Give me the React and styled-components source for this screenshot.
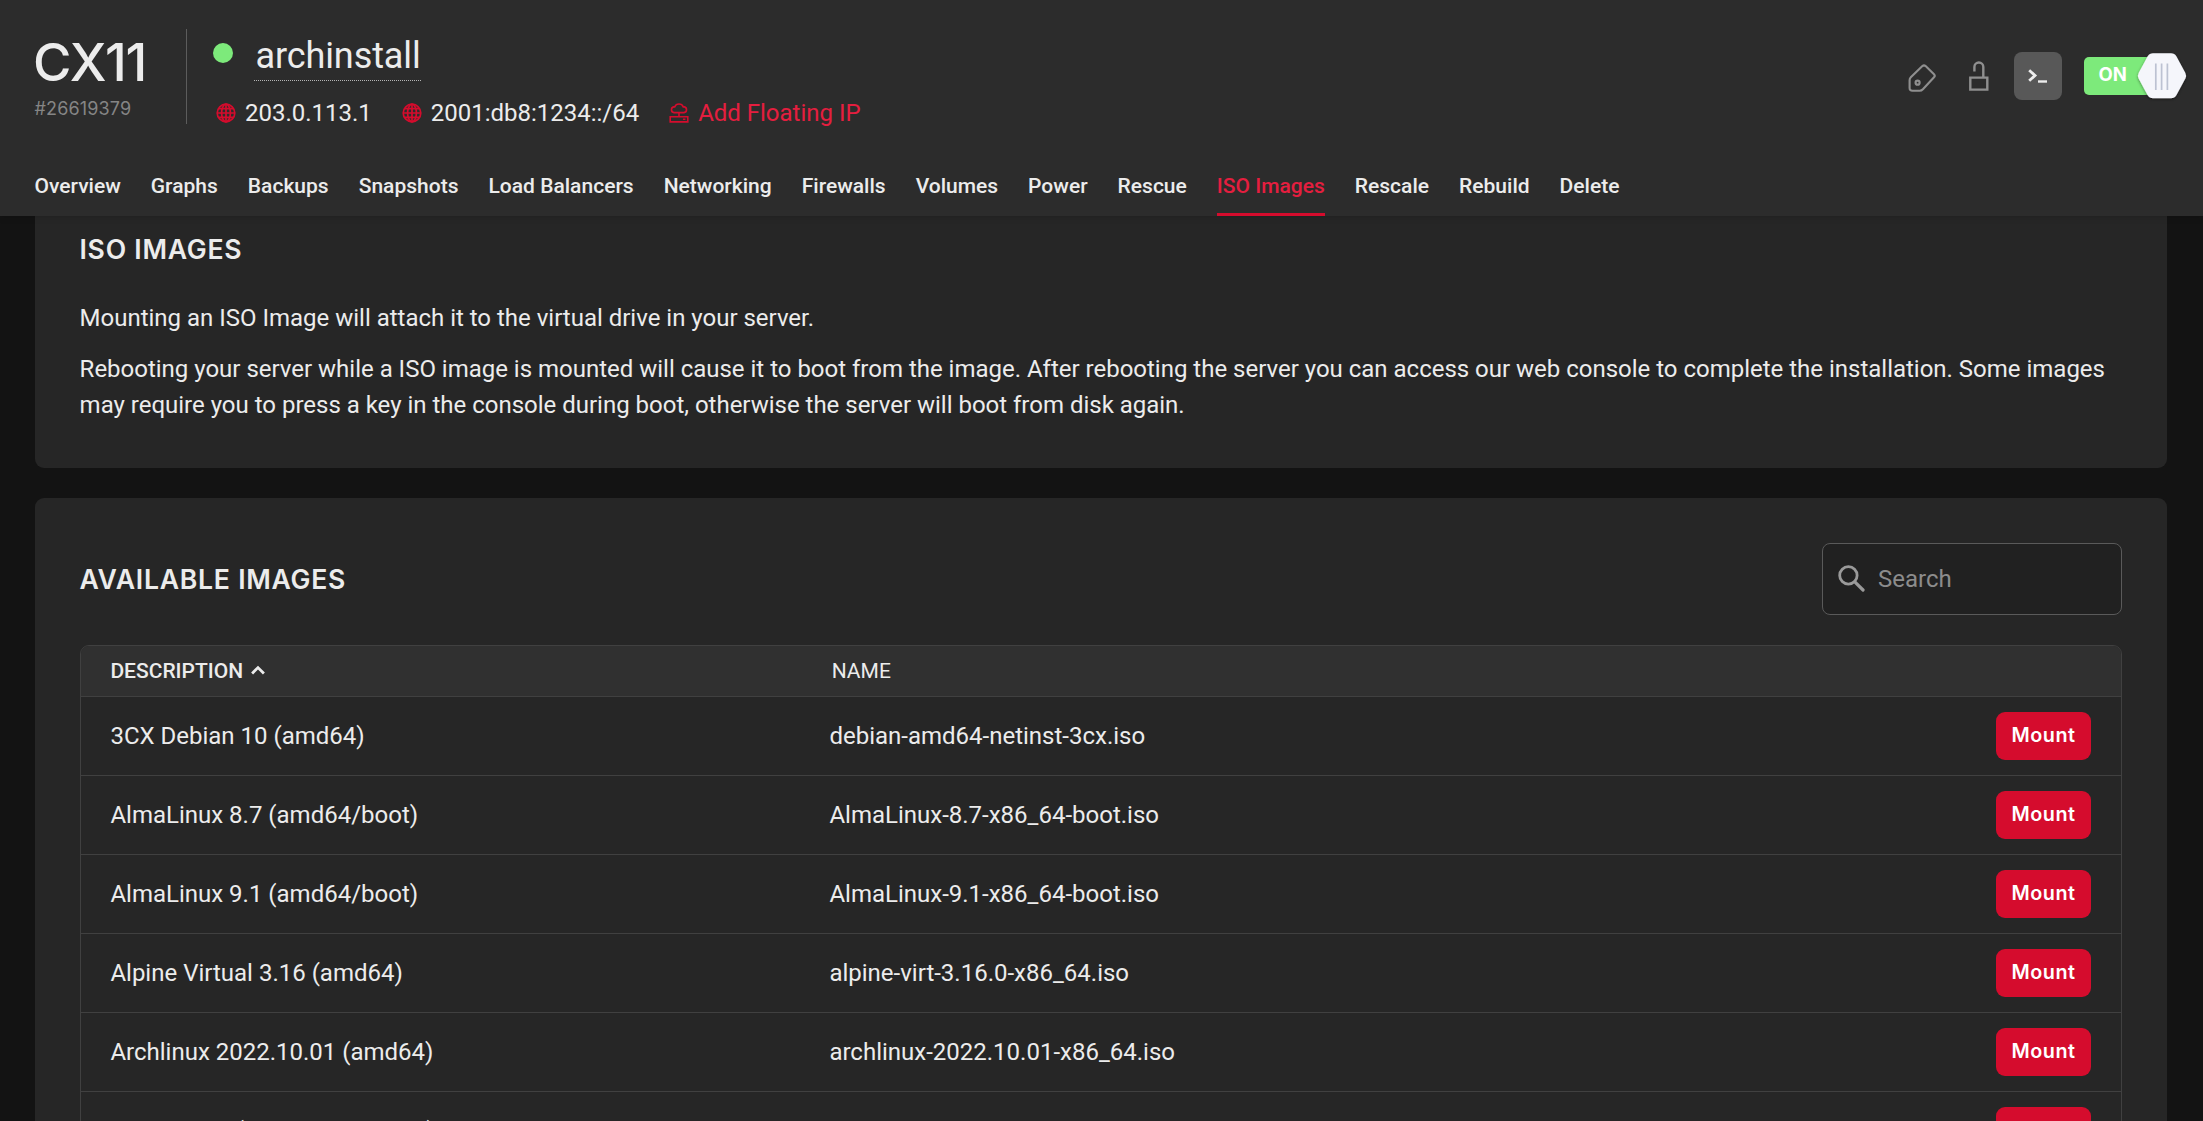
import React from "react";
import styled, { createGlobalStyle } from "styled-components";

const brand = "#d50c2d";
const brandText = "#e51e3f";
const ink = "#ececec";
const heading = `"Inter", "Liberation Sans", sans-serif`;

const GlobalStyle = createGlobalStyle`
  * { box-sizing: border-box; }
  html, body { margin: 0; background: #131313; }
  body {
    height: 1121px;
    overflow: hidden;
    color: ${ink};
    font: 400 24px/36px Roboto, "Liberation Sans", sans-serif;
  }
`;

const Page = styled.div`
  height: 1121px;
  overflow: hidden;
`;
const Header = styled.header`
  position: relative;
  display: flex;
  flex-direction: column;
  justify-content: space-between;
  height: 216px;
  padding: 29px 17px 0 34.5px;
  background: #2c2c2c;
  box-shadow: 0 0 8px rgba(0, 0, 0, 0.18);
`;
const HeaderTop = styled.div`
  display: flex;
  height: 95px;
`;
const Plan = styled.div`
  width: 152.5px;
  border-right: 1px solid #5c5c5c;
  font-family: ${heading};
`;
const PlanName = styled.div`
  height: 64px;
  padding-top: 1px;
  margin-left: -1.5px;
  font-size: 52.5px;
  font-weight: 500;
  line-height: 64px;
  letter-spacing: -1.4px;
  white-space: nowrap;
`;
const PlanId = styled.div`
  margin-top: 5px;
  font-size: 18px;
  line-height: 22px;
  letter-spacing: 0.15px;
  color: #858585;
`;
const Server = styled.div`
  flex: 1;
  padding-left: 26px;
`;
const ServerTitle = styled.div`
  display: flex;
  align-items: flex-start;
`;
const StatusDot = styled.span`
  width: 20px;
  height: 20px;
  margin: 14px 21px 0 0;
  border-radius: 50%;
  background: #7dea7b;
`;
const ServerName = styled.span`
  height: 52px;
  padding: 6px 0.5px 0 1.5px;
  font-size: 36px;
  line-height: 42px;
  letter-spacing: -0.1px;
  border-bottom: 1px dotted #b5b5b5;
`;
const Addresses = styled.div`
  display: flex;
  gap: 30px;
  padding: 14px 0 0 3px;
`;
const Address = styled.span`
  display: flex;
  align-items: center;
  gap: 9px;
  height: 36px;
  line-height: 36px;
  letter-spacing: -0.01px;
  color: ${(p) => (p.$link ? brandText : ink)};
`;
const Actions = styled.div`
  display: flex;
  align-items: center;
  height: 94px;
`;
const IconButton = styled.button`
  display: flex;
  align-items: center;
  justify-content: center;
  width: 48px;
  height: 48px;
  margin: 0 0 0 ${(p) => p.$gap || 0}px;
  padding: ${(p) => p.$drop || 0}px 0 0;
  border: 0;
  border-radius: 8px;
  color: #8f8f8f;
  background: ${(p) => (p.$filled ? "#585858" : "transparent")};
`;
const Toggle = styled.div`
  display: flex;
  align-items: center;
  width: 102px;
  margin-left: 22px;
`;
const ToggleTrack = styled.div`
  flex: none;
  width: 64px;
  height: 38px;
  padding-left: 14.5px;
  border-radius: 5px 0 0 5px;
  background: #7dea7b;
  color: #fff;
  font: 700 18.5px/35px ${heading};
`;
const Knob = styled.svg`
  margin-left: -16px;
  flex: none;
`;
const Nav = styled.nav`
  display: flex;
  gap: 30px;
`;
const Tab = styled.a`
  padding-bottom: 14px;
  border-bottom: 3px solid ${(p) => (p.$active ? brand : "transparent")};
  color: ${(p) => (p.$active ? brandText : ink)};
  font-size: 21px;
  font-weight: 500;
  line-height: 25px;
  letter-spacing: 0.01px;
`;
const Main = styled.main`
  display: flex;
  flex-direction: column;
  gap: 30px;
  padding: 0 36px 0 35px;
`;
const Card = styled.section`
  padding: ${(p) => (p.$scrolled ? 15 : 45)}px 45px 45px;
  border-radius: ${(p) => (p.$scrolled ? "0 0 9px 9px" : "9px")};
  background: #262626;
`;
const Title = styled.h2`
  margin: 0 0 0 -0.5px;
  font: 600 26.6px/36px ${heading};
  text-transform: uppercase;
  letter-spacing: 0.75px;
`;
const Copy = styled.p`
  margin: ${(p) => p.$gap}px 0 0 -0.4px;
  letter-spacing: -0.009px;
`;
const CardHead = styled.div`
  display: flex;
  align-items: center;
  justify-content: space-between;
  margin-bottom: 30px;
`;
const SearchBox = styled.label`
  display: flex;
  align-items: center;
  width: 300px;
  height: 72px;
  padding-left: 14.5px;
  gap: 13.5px;
  border: 1px solid #5a5a5a;
  border-radius: 8px;
  background: #212121;
  color: #8c8c8c;

  svg {
    margin-bottom: 2px;
  }
`;
const Table = styled.div`
  border: 1px solid #404040;
  border-radius: 9px 9px 0 0;
  overflow: hidden;
`;
const Row = styled.div`
  display: grid;
  grid-template-columns: 719px 1fr auto;
  align-items: center;
  height: 79px;
  padding: 0 30px 0 29.4px;
  border-bottom: 1px solid #404040;
`;
const HeadRow = styled(Row)`
  height: 51px;
  background: #303030;
  font-size: 21px;
`;
const HeadCell = styled.div`
  display: flex;
  align-items: center;
  gap: 8px;
  padding-left: ${(p) => (p.$sorted ? 0 : 2.3)}px;
  font-weight: ${(p) => (p.$sorted ? 500 : 400)};

  svg {
    margin-bottom: 2px;
  }
`;
const MountButton = styled.button`
  width: 95px;
  height: 48px;
  margin: 0;
  padding: 0 0 2px;
  border: 0;
  border-radius: 9px;
  background: ${brand};
  color: #fff;
  font: 600 19.8px/46px ${heading};
  letter-spacing: 0.55px;
`;

const GlobeIcon = () => (
  <svg width="20" height="20" viewBox="0 0 20 20" fill="none" stroke={brand} strokeWidth="1.7">
    <circle cx="10" cy="10" r="8.8" />
    <ellipse cx="10" cy="10" rx="4.4" ry="8.8" />
    <path d="M10 1v18M1 10h18M2.6 5.6h14.8M2.6 14.4h14.8" />
  </svg>
);
const FloatingIcon = () => (
  <svg width="20" height="20" viewBox="0 0 20 20" fill="none" stroke={brand} strokeWidth="1.6">
    <path d="M5 9.6a2.9 2.9 0 0 1-.3-5.7h1A4.6 4.6 0 0 1 14.3 3.9h1a2.9 2.9 0 0 1-.3 5.7Z" />
    <path d="M10 9.6v4.2M1.2 18.9v-5.2h17.6v5.2ZM14 16.3h2.4" />
  </svg>
);
const TagIcon = () => (
  <svg width="28" height="28" viewBox="0 0 28 28" fill="none" stroke="currentColor" strokeWidth="2.1" strokeLinejoin="round">
    <path d="M14.4 2.1Q16 .7 17.6 2.1L26 10.2Q27.5 11.8 26 13.3L14.9 25.3Q13.5 26.8 11.6 26.8H4.4Q1.6 26.8 1.6 24V16.2Q1.6 14.4 2.8 13.2Z" />
    <circle cx="9.6" cy="18.7" r="2" strokeWidth="2.2" />
  </svg>
);
const UnlockIcon = () => (
  <svg width="20" height="30" viewBox="0 0 20 30" fill="none" stroke="currentColor" strokeWidth="2.4">
    <path d="M1.3 16.6h17v12h-17Z" />
    <path d="M5.4 10.4V5.9a4.4 4.4 0 0 1 8.9 0v10.5" />
  </svg>
);
const TerminalIcon = () => (
  <svg width="20" height="14" viewBox="0 0 20 14" fill="none" stroke="#ededed">
    <path d="M1.2 1.2 7 6.5l-5.8 5.3" strokeWidth="2.8" />
    <path d="M10 12.5h9" strokeWidth="2.4" />
  </svg>
);
const SearchIcon = () => (
  <svg width="27" height="27" viewBox="0 0 27 27" fill="none" stroke="#9a9a9a">
    <circle cx="10.4" cy="10.4" r="8.7" strokeWidth="2.8" />
    <path d="M16.8 16.8 25 25" strokeWidth="3.2" strokeLinecap="round" />
  </svg>
);
const SortIcon = () => (
  <svg width="14" height="10" viewBox="0 0 14 10" fill="none" stroke={ink} strokeWidth="2.8">
    <path d="M1.1 8.4 7 2.6l5.9 5.8" />
  </svg>
);

const tabs = ["Overview", "Graphs", "Backups", "Snapshots", "Load Balancers", "Networking", "Firewalls",
  "Volumes", "Power", "Rescue", "ISO Images", "Rescale", "Rebuild", "Delete"];

const images = [
  ["3CX Debian 10 (amd64)", "debian-amd64-netinst-3cx.iso"],
  ["AlmaLinux 8.7 (amd64/boot)", "AlmaLinux-8.7-x86_64-boot.iso"],
  ["AlmaLinux 9.1 (amd64/boot)", "AlmaLinux-9.1-x86_64-boot.iso"],
  ["Alpine Virtual 3.16 (amd64)", "alpine-virt-3.16.0-x86_64.iso"],
  ["Archlinux 2022.10.01 (amd64)", "archlinux-2022.10.01-x86_64.iso"],
  ["CentOS 7.9 (amd64/netinstall)", ""],
];

export default function App() {
  return (
    <Page>
      <GlobalStyle />
      <Header>
        <HeaderTop>
          <Plan>
            <PlanName>CX11</PlanName>
            <PlanId>#26619379</PlanId>
          </Plan>
          <Server>
            <ServerTitle>
              <StatusDot />
              <ServerName>archinstall</ServerName>
            </ServerTitle>
            <Addresses>
              <Address><GlobeIcon />203.0.113.1</Address>
              <Address><GlobeIcon />2001:db8:1234::/64</Address>
              <Address $link><FloatingIcon />Add Floating IP</Address>
            </Addresses>
          </Server>
          <Actions>
            <IconButton $drop={4} aria-label="Labels"><TagIcon /></IconButton>
            <IconButton $gap={9} aria-label="Protection"><UnlockIcon /></IconButton>
            <IconButton $gap={11} $filled aria-label="Console"><TerminalIcon /></IconButton>
            <Toggle>
              <ToggleTrack>ON</ToggleTrack>
              <Knob width="56" height="56" viewBox="0 0 56 56">
                <defs>
                  <filter id="knobShadow" x="-20%" y="-20%" width="140%" height="140%">
                    <feDropShadow dx="0" dy="1" stdDeviation="1.6" floodColor="#000" floodOpacity="0.45" />
                  </filter>
                </defs>
                <path
                  d="M21 5.3H39Q42.5 5.3 44.5 8.5L53.4 25Q54.8 27.8 53.4 30.6L44.5 47.1Q42.5 50.3 39 50.3H21Q17.5 50.3 15.5 47.1L6.6 30.6Q5.2 27.8 6.6 25L15.5 8.5Q17.5 5.3 21 5.3Z"
                  fill="#f5f6fb"
                  filter="url(#knobShadow)"
                />
                <path d="M23.8 15.5v26.5M29.6 15.5v26.5M35.4 15.5v26.5" stroke="#bcc2d2" strokeWidth="1.7" />
              </Knob>
            </Toggle>
          </Actions>
        </HeaderTop>
        <Nav>
          {tabs.map((t) => <Tab key={t} $active={t === "ISO Images"}>{t}</Tab>)}
        </Nav>
      </Header>
      <Main>
        <Card $scrolled>
          <Title>ISO Images</Title>
          <Copy $gap={33}>Mounting an ISO Image will attach it to the virtual drive in your server.</Copy>
          <Copy $gap={15}>
            Rebooting your server while a ISO image is mounted will cause it to boot from the image. After
            rebooting the server you can access our web console to complete the installation. Some images may
            require you to press a key in the console during boot, otherwise the server will boot from disk again.
          </Copy>
        </Card>
        <Card>
          <CardHead>
            <Title>Available Images</Title>
            <SearchBox><SearchIcon />Search</SearchBox>
          </CardHead>
          <Table>
            <HeadRow>
              <HeadCell $sorted>DESCRIPTION<SortIcon /></HeadCell>
              <HeadCell>NAME</HeadCell>
            </HeadRow>
            {images.map(([description, name]) => (
              <Row key={description}>
                <span>{description}</span>
                <span>{name}</span>
                <MountButton>Mount</MountButton>
              </Row>
            ))}
          </Table>
        </Card>
      </Main>
    </Page>
  );
}
